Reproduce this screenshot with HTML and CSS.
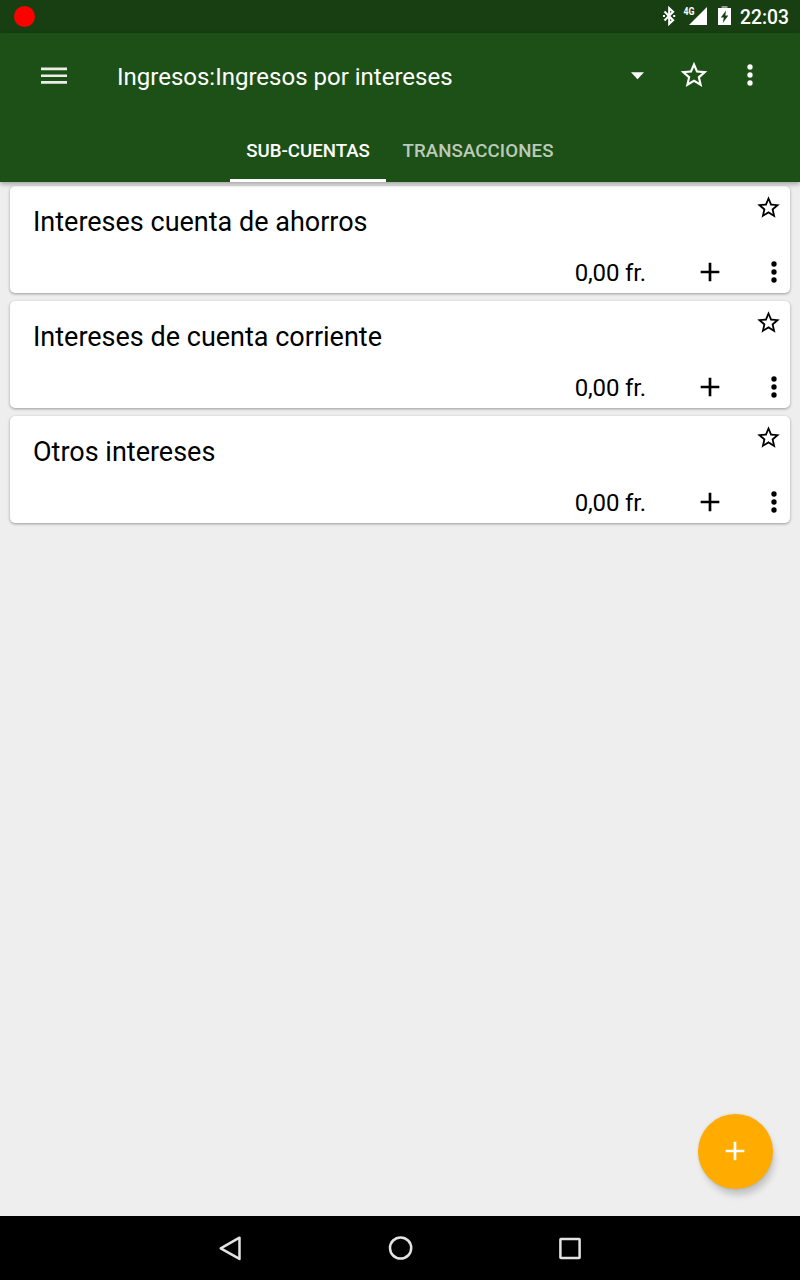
FILE: index.html
```html
<!DOCTYPE html>
<html lang="es">
<head>
<meta charset="utf-8">
<title>Ingresos por intereses</title>
<link rel="stylesheet" href="styles.css">
</head>
<body>
<svg class="defs" width="0" height="0" aria-hidden="true">
  <symbol id="star" viewBox="0 0 24 24"><path d="M22 9.24l-7.19-.62L12 2 9.19 8.63 2 9.24l5.46 4.73L5.82 21 12 17.27 18.18 21l-1.63-7.03L22 9.24zM12 15.4l-3.76 2.27 1-4.28-3.32-2.88 4.38-.38L12 6.1l1.71 4.04 4.38.38-3.32 2.88 1 4.28L12 15.4z"/></symbol>
  <symbol id="more" viewBox="0 0 24 24"><circle cx="12" cy="6" r="2"/><circle cx="12" cy="12" r="2"/><circle cx="12" cy="18" r="2"/></symbol>
  <symbol id="add" viewBox="0 0 24 24"><path d="M19 13h-6v6h-2v-6H5v-2h6V5h2v6h6z"/></symbol>
</svg>
<div class="screen">
  <div class="status">
    <span class="record"></span>
    <div class="indicators">
      <svg class="bluetooth" width="14" height="20" viewBox="0 0 14 20" fill="none" stroke="#fff" stroke-width="2.1"><path d="M2.5 5.5l8.6 8.7-3.9 3.6V2.2l3.9 3.6-8.6 8.7"/><path d="M1 10h2M11.2 10h2" stroke-width="2"/></svg>
      <svg class="signal" width="25" height="20" viewBox="0 0 25 20" fill="#fff"><path d="M24 1v18H6z"/><text x="0.5" y="9" textLength="11" lengthAdjust="spacingAndGlyphs">4G</text></svg>
      <svg class="battery" width="13" height="20" viewBox="0 0 13 20"><path fill="#8b9f87" d="M3.5 0h6v2.5h-6z"/><path fill="#fff" fill-rule="evenodd" d="M0 2h13v17H0zM8 4.5L2.8 11.4h3L4.8 17l5.5-7.4h-3z"/></svg>
      <span class="clock">22:03</span>
    </div>
  </div>
  <header class="header">
    <div class="toolbar">
      <svg class="menu" width="26" height="18" viewBox="0 0 26 18" fill="#e9eee8"><path d="M0 .6h26v2.7H0zM0 7.4h26v2.7H0zM0 14.1h26v2.7H0z"/></svg>
      <h1 class="title">Ingresos:Ingresos por intereses</h1>
      <svg class="caret" width="14" height="8" viewBox="0 0 14 8" fill="#fff"><path d="M0 .3h13L6.5 7.2z"/></svg>
      <svg class="icon favorite"><use href="#star"/></svg>
      <svg class="icon overflow"><use href="#more"/></svg>
    </div>
    <nav class="tabs">
      <div class="tab active"><span>SUB-CUENTAS</span></div>
      <div class="tab transactions"><span>TRANSACCIONES</span></div>
    </nav>
  </header>
  <main class="list">
    <article class="card">
      <div class="card-top"><h2 class="name">Intereses cuenta de ahorros</h2><svg class="card-star"><use href="#star"/></svg></div>
      <div class="card-bottom"><span class="amount">0,00 fr.</span><svg class="icon plus"><use href="#add"/></svg><svg class="icon"><use href="#more"/></svg></div>
    </article>
    <article class="card">
      <div class="card-top"><h2 class="name">Intereses de cuenta corriente</h2><svg class="card-star"><use href="#star"/></svg></div>
      <div class="card-bottom"><span class="amount">0,00 fr.</span><svg class="icon plus"><use href="#add"/></svg><svg class="icon"><use href="#more"/></svg></div>
    </article>
    <article class="card">
      <div class="card-top"><h2 class="name">Otros intereses</h2><svg class="card-star"><use href="#star"/></svg></div>
      <div class="card-bottom"><span class="amount">0,00 fr.</span><svg class="icon plus"><use href="#add"/></svg><svg class="icon"><use href="#more"/></svg></div>
    </article>
    <div class="fab"><svg class="icon"><use href="#add"/></svg></div>
  </main>
  <footer class="navbar">
    <svg width="26" height="28" viewBox="0 0 26 28"><path d="M22.5 3.7v21.2L3.7 14.3z"/></svg>
    <svg width="26" height="28" viewBox="0 0 26 28"><circle cx="13.6" cy="14" r="10.6"/></svg>
    <svg width="26" height="28" viewBox="0 0 26 28"><rect x="3.4" y="4.9" width="19.2" height="19.2" rx=".5"/></svg>
  </footer>
</div>
</body>
</html>
```

FILE: styles.css
```css
* { box-sizing: border-box; }
body { margin: 0; font-family: Roboto, sans-serif; }
svg { display: block; flex: none; }
.defs { position: absolute; }
.screen { width: 800px; height: 1280px; display: flex; flex-direction: column; background: #eee; overflow: hidden; }
.status { height: 33px; flex: none; background: #173f12; display: flex; justify-content: space-between; padding: 0 11px 0 13.5px; }
.record { width: 21px; height: 21px; border-radius: 50%; background: #f00; margin-top: 6px; }
.indicators { display: flex; align-items: flex-start; padding-top: 6px; }
.signal { margin-left: 7px; }
.signal text { font: 700 10px Roboto, sans-serif; }
.battery { margin-left: 10px; }
.clock { margin-left: 9px; color: #fff; font-size: 19.3px; font-weight: 500; line-height: 23px; width: 49px; white-space: nowrap; }
.header { height: 149px; flex: none; background: #1d5017; color: #fff; box-shadow: 0 2px 5px rgba(0,0,0,.34); z-index: 1; }
.toolbar { height: 85px; display: flex; align-items: center; padding-left: 41px; }
.title { margin: 3px 0 0 50px; width: 514px; font-size: 24px; font-weight: 400; line-height: 30px; white-space: nowrap; }
.icon { width: 32px; height: 32px; fill: currentColor; }
.toolbar .icon { margin-bottom: 1px; }
.favorite { margin-left: 33px; }
.overflow { margin-left: 23.5px; }
.tabs { height: 64px; display: flex; padding-left: 230px; }
.tab { width: 156px; text-align: center; border-bottom: 3px solid transparent; line-height: 66px; font-size: 18.67px; font-weight: 500; color: #bbcab9; white-space: nowrap; }
.tab.active { color: #fff; border-color: #fff; }
.tab.transactions { width: 184px; letter-spacing: .1px; }
.list { flex: 1; display: flex; flex-direction: column; gap: 8px; padding: 4px 10px 0; position: relative; }
.card { height: 107px; background: #fff; border-radius: 5px; box-shadow: 0 1px 3px rgba(0,0,0,.36); display: flex; flex-direction: column; justify-content: space-between; }
.card-top { display: flex; justify-content: space-between; padding: 8px 8px 0 23px; }
.name { margin: 11px 0 0; font-size: 27px; font-weight: 400; line-height: 34px; color: #000; white-space: nowrap; }
.card-star { width: 27px; height: 27px; }
.card-bottom { display: flex; align-items: center; justify-content: flex-end; height: 42px; }
.amount { font-size: 24px; line-height: 30px; letter-spacing: -.15px; padding-top: 2px; white-space: nowrap; }
.plus { margin: 0 32px 0 48px; }
.fab { position: absolute; right: 27px; bottom: 27px; width: 75px; height: 75px; border-radius: 50%; background: #ffab00; color: #fff; display: flex; align-items: center; justify-content: center; box-shadow: 3px 8px 7px -2px rgba(0,0,0,.19), 0 0 3px rgba(0,0,0,.12); }
.fab .icon { margin: 0 1px 1px 0; }
.navbar { height: 64px; flex: none; background: #000; display: flex; align-items: center; justify-content: center; gap: 144px; }
.navbar svg { fill: none; stroke: #e3e3e3; stroke-width: 2.5; stroke-linejoin: round; }
```
